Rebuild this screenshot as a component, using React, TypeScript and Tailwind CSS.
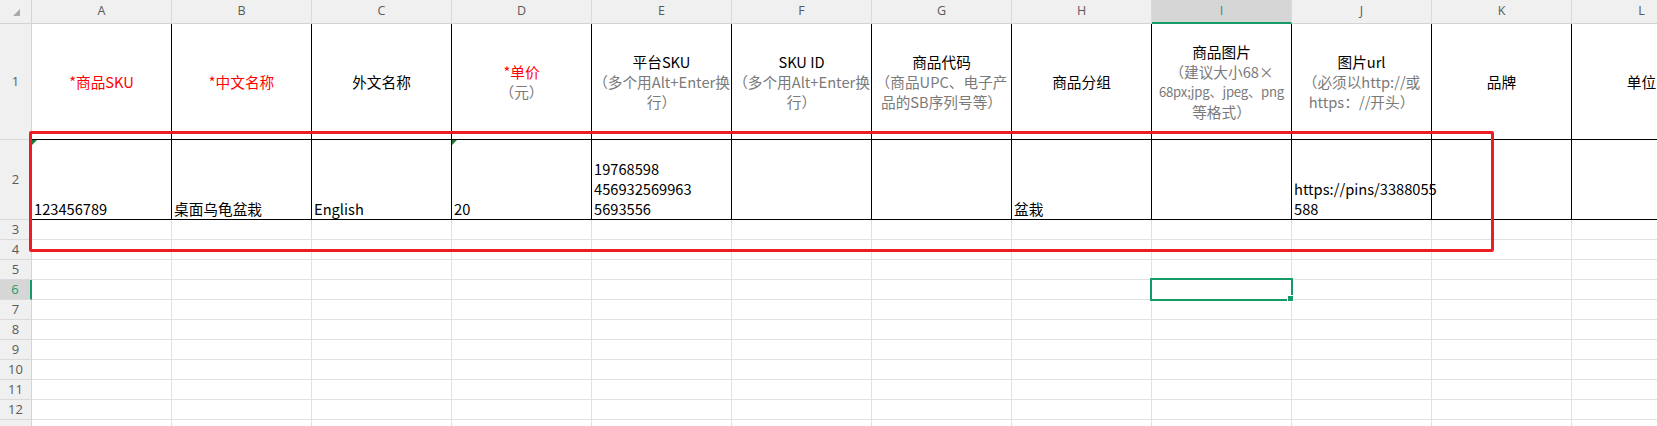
import React from "react";

const cols = ["A", "B", "C", "D", "E", "F", "G", "H", "I", "J", "K", "L"];

const Red = ({ children }: { children: React.ReactNode }) => (
  <div className="text-[#ff0000]">{children}</div>
);
const Sub = ({ children }: { children: React.ReactNode }) => (
  <div className="text-[#7a7a7a]">{children}</div>
);

const headers: React.ReactNode[] = [
  <Red>*商品SKU</Red>,
  <Red>*中文名称</Red>,
  <div>外文名称</div>,
  <>
    <Red>*单价</Red>
    <Sub>（元）</Sub>
  </>,
  <>
    <div>平台SKU</div>
    <Sub>（多个用Alt+Enter换</Sub>
    <Sub>行）</Sub>
  </>,
  <>
    <div>SKU ID</div>
    <Sub>（多个用Alt+Enter换</Sub>
    <Sub>行）</Sub>
  </>,
  <>
    <div>商品代码</div>
    <Sub>（商品UPC、电子产</Sub>
    <Sub>品的SB序列号等）</Sub>
  </>,
  <div>商品分组</div>,
  <>
    <div>商品图片</div>
    <Sub>（建议大小68×</Sub>
    <div className="text-[13.2px] tracking-[-0.2px] text-[#7a7a7a]">68px;jpg、jpeg、png</div>
    <Sub>等格式）</Sub>
  </>,
  <>
    <div>图片url</div>
    <Sub>（必须以http://或</Sub>
    <Sub>https：//开头）</Sub>
  </>,
  <div>品牌</div>,
  <div>单位</div>,
];

const row2: { lines: string[]; tri?: boolean }[] = [
  { lines: ["123456789"], tri: true },
  { lines: ["桌面乌龟盆栽"] },
  { lines: ["English"] },
  { lines: ["20"], tri: true },
  { lines: ["19768598", "456932569963", "5693556"] },
  { lines: [] },
  { lines: [] },
  { lines: ["盆栽"] },
  { lines: [] },
  { lines: ["https://pins/3388055", "588"] },
  { lines: [] },
  { lines: [] },
];

const emptyRows = [3, 4, 5, 6, 7, 8, 9, 10, 11, 12, 13];

const App = () => {
  return (
    <div className="relative h-[426px] w-[1657px] overflow-hidden bg-white font-['Noto_Sans_CJK_SC',sans-serif] text-black">
      <div className="grid w-[1712px] grid-cols-[32px_repeat(12,140px)] grid-rows-[24px_116px_80px_repeat(11,20px)]">
        {/* corner */}
        <div className="flex items-start border-b border-r border-[#d4d4d4] bg-[#f0f0f0] pl-[13px] pt-[9px]">
          <svg width="7" height="7" viewBox="0 0 7 7">
            <polygon points="7,0 7,7 0,7" fill="#a8a8a8" />
          </svg>
        </div>
        {cols.map((c) =>
          c === "I" ? (
            <div
              key={c}
              className="flex items-center justify-center border-r border-b-2 border-r-[#dadada] border-b-[#159b68] bg-[#d6d6d6] font-['Open_Sans',sans-serif] text-[12.5px] text-[#159b68]"
            >
              {c}
            </div>
          ) : (
            <div
              key={c}
              className="flex items-center justify-center border-b border-r border-b-[#d4d4d4] border-r-[#dadada] bg-[#f0f0f0] font-['Open_Sans',sans-serif] text-[12.5px] text-[#5a5a5a]"
            >
              {c}
            </div>
          )
        )}

        {/* row 1 */}
        <div className="flex items-center justify-center border-b border-r border-b-[#dadada] border-r-[#d4d4d4] bg-[#f0f0f0] font-['Open_Sans',sans-serif] text-[13px] text-[#5a5a5a]">
          1
        </div>
        {headers.map((h, i) => (
          <div
            key={i}
            className="flex flex-col items-center justify-center whitespace-nowrap border-b border-r border-black text-center text-[14.67px] leading-[20px]"
          >
            {h}
          </div>
        ))}

        {/* row 2 */}
        <div className="flex items-center justify-center border-b border-r border-b-[#dadada] border-r-[#d4d4d4] bg-[#f0f0f0] font-['Open_Sans',sans-serif] text-[13px] text-[#5a5a5a]">
          2
        </div>
        {row2.map((cell, i) => (
          <div
            key={i}
            className="relative flex flex-col justify-end whitespace-nowrap border-b border-r border-black pl-[2px] text-[14.67px] leading-[20px]"
          >
            {cell.tri && (
              <span className="absolute left-0 top-0 h-0 w-0 border-r-[5px] border-t-[5px] border-r-transparent border-t-[#1e7b34]" />
            )}
            {cell.lines.map((l, j) => (
              <div key={j}>{l}</div>
            ))}
          </div>
        ))}

        {/* empty rows */}
        {emptyRows.map((r) => (
          <React.Fragment key={r}>
            {r === 6 ? (
              <div className="flex items-center justify-center border-b border-r-2 border-b-[#dadada] border-r-[#159b68] bg-[#d6d6d6] font-['Open_Sans',sans-serif] text-[13px] text-[#159b68]">
                {r}
              </div>
            ) : (
              <div className="flex items-center justify-center border-b border-r border-b-[#dadada] border-r-[#d4d4d4] bg-[#f0f0f0] font-['Open_Sans',sans-serif] text-[13px] text-[#5a5a5a]">
                {r < 13 ? r : ""}
              </div>
            )}
            {cols.map((c) => (
              <div key={c} className="border-b border-r border-[#e1e1e1]" />
            ))}
          </React.Fragment>
        ))}
      </div>

      {/* red annotation box */}
      <div className="absolute left-[29px] top-[131px] h-[121px] w-[1465px] rounded-[2px] border-[3px] border-[#ee1c25]" />

      {/* selected cell I6 */}
      <div className="absolute left-[1150px] top-[278px] h-[23px] w-[143px] border-2 border-[#159b68]" />
      <div className="absolute left-[1287px] top-[295px] h-[7px] w-[7px] border border-white bg-[#159b68]" />
    </div>
  );
};

export default App;
